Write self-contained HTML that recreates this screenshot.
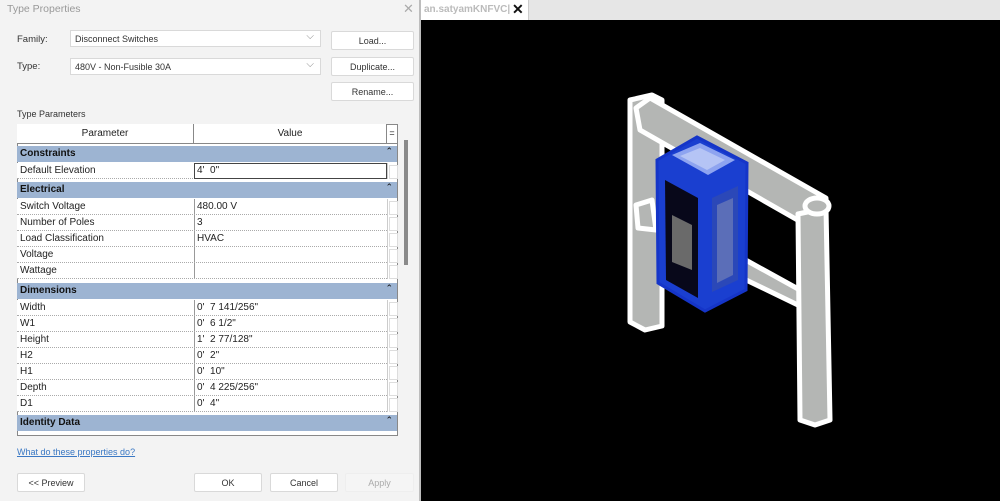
<!DOCTYPE html>
<html><head><style>
*{margin:0;padding:0;box-sizing:border-box}
body{width:1000px;height:501px;overflow:hidden;background:#000;font-family:"Liberation Sans",sans-serif;font-size:10px;color:#222;position:relative}
.a{position:absolute}
.dlg{left:0;top:0;width:421px;height:501px;background:#f3f3f3;border-right:2px solid #bdbdbd}
.lbl{font-size:9.5px;color:#333}
.sel{background:#fff;border:1px solid #d9d9d9;height:17px;font-size:9px;padding:3px 0 0 4px;color:#333}
.sel::after{content:"⌵";position:absolute;right:6px;top:0px;color:#888;font-size:10px}
.btn{background:#fff;border:1px solid #d9d9d9;border-radius:2px;height:19px;font-size:9px;text-align:center;line-height:18px;color:#333}
.row{position:absolute;left:17px;width:370px;height:16px;background:#fff;border-bottom:1px dotted #aaa;font-size:10px}
.row span{position:absolute;top:2px}
.row .p{left:3px}.row .v{left:180px}
.row::before{content:"";position:absolute;left:177px;top:0;bottom:0;border-left:1px solid #999}
.grp{position:absolute;left:17px;width:380px;height:16px;background:#9db4d2;font-weight:bold;font-size:10px;color:#111;padding:2px 0 0 3px}
.grp::after{content:"⌃";position:absolute;right:4px;top:0;font-size:9px;font-weight:normal}
.nb{position:absolute;left:387px;width:10px;height:16px;background:#fff;border-left:1px solid #ccc}
.nb::after{content:"";position:absolute;left:1px;top:2px;width:7px;height:12px;border:1px solid #ddd}
</style></head><body>
<div class="a dlg">
<div class="a" style="left:7px;top:3px;font-size:10.5px;color:#999">Type Properties</div>
<div class="a" style="left:403px;top:1px;font-size:13px;color:#aaa">✕</div>
<div class="a lbl" style="left:17px;top:34px">Family:</div>
<div class="a lbl" style="left:17px;top:61px">Type:</div>
<div class="a sel" style="left:70px;top:30px;width:251px">Disconnect Switches</div>
<div class="a sel" style="left:70px;top:58px;width:251px">480V - Non-Fusible 30A</div>
<div class="a btn" style="left:331px;top:31px;width:83px">Load...</div>
<div class="a btn" style="left:331px;top:57px;width:83px">Duplicate...</div>
<div class="a btn" style="left:331px;top:82px;width:83px">Rename...</div>
<div class="a lbl" style="left:17px;top:109px;font-size:9px">Type Parameters</div>
<div class="a" style="left:17px;top:124px;width:381px;height:312px;background:#fff;border:1px solid #888"></div>
<div class="a" style="left:17px;top:124px;width:177px;height:20px;border-right:1px solid #888;border-bottom:1px solid #888;text-align:center;line-height:19px;font-size:10px;background:#fff">Parameter</div>
<div class="a" style="left:194px;top:124px;width:193px;height:20px;border-right:1px solid #888;border-bottom:1px solid #888;text-align:center;line-height:19px;font-size:10px;background:#fff">Value</div>
<div class="a" style="left:387px;top:124px;width:10px;height:20px;border-bottom:1px solid #888;text-align:center;line-height:19px;font-size:9px">=</div>
<div class="grp" style="top:146px">Constraints</div>
<div class="row" style="top:163px"><span class="p">Default Elevation</span><span class="v" style="left:177px;top:0;width:193px;height:16px;border:1px solid #444;padding:1px 2px">4'&nbsp; 0"</span></div><div class="nb" style="top:163px"></div>
<div class="grp" style="top:182px">Electrical</div>
<div class="row" style="top:199px"><span class="p">Switch Voltage</span><span class="v">480.00 V</span></div><div class="nb" style="top:199px"></div>
<div class="row" style="top:215px"><span class="p">Number of Poles</span><span class="v">3</span></div><div class="nb" style="top:215px"></div>
<div class="row" style="top:231px"><span class="p">Load Classification</span><span class="v">HVAC</span></div><div class="nb" style="top:231px"></div>
<div class="row" style="top:247px"><span class="p">Voltage</span></div><div class="nb" style="top:247px"></div>
<div class="row" style="top:263px"><span class="p">Wattage</span></div><div class="nb" style="top:263px"></div>
<div class="grp" style="top:283px">Dimensions</div>
<div class="row" style="top:300px"><span class="p">Width</span><span class="v">0'&nbsp; 7 141/256"</span></div><div class="nb" style="top:300px"></div>
<div class="row" style="top:316px"><span class="p">W1</span><span class="v">0'&nbsp; 6 1/2"</span></div><div class="nb" style="top:316px"></div>
<div class="row" style="top:332px"><span class="p">Height</span><span class="v">1'&nbsp; 2 77/128"</span></div><div class="nb" style="top:332px"></div>
<div class="row" style="top:348px"><span class="p">H2</span><span class="v">0'&nbsp; 2"</span></div><div class="nb" style="top:348px"></div>
<div class="row" style="top:364px"><span class="p">H1</span><span class="v">0'&nbsp; 10"</span></div><div class="nb" style="top:364px"></div>
<div class="row" style="top:380px"><span class="p">Depth</span><span class="v">0'&nbsp; 4 225/256"</span></div><div class="nb" style="top:380px"></div>
<div class="row" style="top:396px"><span class="p">D1</span><span class="v">0'&nbsp; 4"</span></div><div class="nb" style="top:396px"></div>
<div class="grp" style="top:415px">Identity Data</div>
<div class="a" style="left:404px;top:140px;width:4px;height:125px;background:#8a8a8a"></div>
<div class="a" style="left:17px;top:447px;font-size:9px;color:#3a78c4;text-decoration:underline">What do these properties do?</div>
<div class="a btn" style="left:17px;top:473px;width:68px">&lt;&lt; Preview</div>
<div class="a btn" style="left:194px;top:473px;width:68px">OK</div>
<div class="a btn" style="left:270px;top:473px;width:68px">Cancel</div>
<div class="a btn" style="left:345px;top:473px;width:69px;background:#f5f5f5;color:#aaa;border-color:#eee">Apply</div>
</div>
<div class="a" style="left:421px;top:0;width:579px;height:20px;background:#e6e6e6"></div>
<div class="a" style="left:421px;top:0;width:108px;height:20px;background:#fff;border-right:1px solid #ccc"></div>
<div class="a" style="left:424px;top:4px;font-size:10px;color:#bbb;font-weight:bold">an.satyamKNFVC|</div>
<div class="a" style="left:512px;top:1px;font-size:14px;color:#111;font-weight:bold">✕</div>
<svg class="a" style="left:0;top:0" width="1000" height="501">
<g stroke="#fff" stroke-width="5" stroke-linejoin="round" fill="#b4b6b4">
<polygon points="630,100 652,95 662,100 662,326 645,330 630,322"/>
<polygon points="636,108 650,98 826,198 826,222 808,226 640,130"/>
<polygon points="742,258 800,290 800,306 742,278"/>
<polygon points="636,205 652,200 656,230 638,228"/>
<polygon points="798,214 826,208 830,420 815,425 800,420"/>
<ellipse cx="817" cy="206" rx="12" ry="8"/>
</g>
<polygon points="657,160 697,137 747,163 746,290 705,311 658,283" fill="#1a3fd0" stroke="#1535c8" stroke-width="3"/>
<polygon points="672,155 700,143 735,160 708,175" fill="#8ea4f0"/>
<polygon points="680,156 700,148 725,160 707,170" fill="#b5c4f5"/>
<polygon points="665,180 698,198 698,298 666,280" fill="#08081a"/>
<polygon points="672,215 692,225 692,270 672,262" fill="#6a6a6a"/>
<polygon points="712,198 738,186 738,280 712,292" fill="#2b48b8"/>
<polygon points="717,205 733,198 733,275 717,283" fill="#7b88b8" opacity=".6"/>
</svg>
</body></html>
